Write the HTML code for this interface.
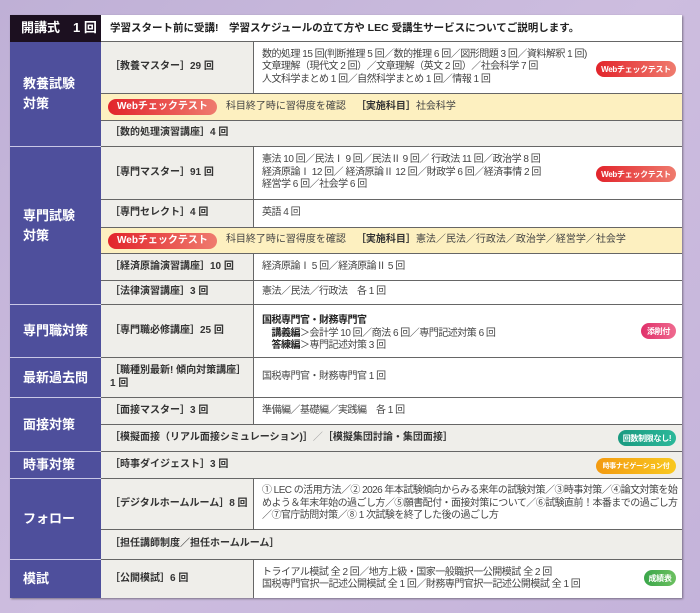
<!DOCTYPE html>
<html><head><meta charset="utf-8"><style>
*{margin:0;padding:0;box-sizing:border-box}
body{width:700px;height:613px;overflow:hidden;position:relative;background:linear-gradient(135deg,#bfb0d6 0%,#cdbddf 50%,#c4b3da 100%);font-family:"Liberation Sans","Noto Sans CJK JP",sans-serif;color:#333}
.t{position:absolute;left:10px;top:15px;width:672px;height:583px;background:#fff;box-shadow:1px 1px 2px rgba(0,0,0,.4)}
.b{position:absolute;display:flex;align-items:center;font-size:10px;line-height:12.5px}
.L{background:#4e4f9c;color:#fff;font-weight:bold;font-size:13px;line-height:20px;padding-left:13px;border-bottom:1px solid #c9c8e6}
.M{background:#efeeea;padding-left:9px;font-weight:bold;color:#333;border-bottom:1px solid #666;border-right:1px solid #666}
.R{background:#fff;padding-left:8px;border-bottom:1px solid #666;color:#444;letter-spacing:-0.5px}
.F{background:#efeeea;padding-left:9px;font-weight:bold;border-bottom:1px solid #666}
.Y{background:#fdf0c0;padding-left:7px;border-bottom:1px solid #666;color:#444}
.bd{position:absolute;height:16px;border-radius:8px;color:#fff;font-weight:bold;font-size:8px;display:flex;align-items:center;justify-content:center;white-space:nowrap;letter-spacing:-0.3px}
.web{background:linear-gradient(90deg,#e2242b,#ef7b6e);}
.wb{display:inline-block;height:16px;line-height:16px;padding:0 9px;border-radius:8px;color:#fff;font-weight:bold;font-size:10px;margin-right:9px;background:linear-gradient(90deg,#e2242b,#ef7b6e)}
</style></head><body>
<div class="t">
<div class="b" style="left:0;top:0;width:91px;height:27px;background:#1c1020;color:#fff;font-weight:bold;font-size:13px;padding-left:11px">開講式　1 回</div>
<div class="b" style="left:91px;top:0;width:581px;height:27px;padding-left:9px;font-weight:bold;border-bottom:1px solid #666;color:#222;font-size:10.5px">学習スタート前に受講!　学習スケジュールの立て方や LEC 受講生サービスについてご説明します。</div>

<div class="b L" style="left:0;top:27px;width:91px;height:105px">教養試験<br>対策</div>
<div class="b M" style="left:91px;top:27px;width:153px;height:52px">［教養マスター］29 回</div>
<div class="b R" style="left:244px;top:27px;width:428px;height:52px">数的処理 15 回(判断推理 5 回／数的推理 6 回／図形問題 3 回／資料解釈 1 回)<br>文章理解（現代文 2 回）／文章理解（英文 2 回）／社会科学 7 回<br>人文科学まとめ 1 回／自然科学まとめ 1 回／情報 1 回</div>
<div class="bd web" style="left:586px;top:46px;width:80px">Webチェックテスト</div>
<div class="b Y" style="left:91px;top:79px;width:581px;height:27px"><span class="wb">Webチェックテスト</span>科目終了時に習得度を確認　<b style="color:#333">［実施科目］</b>社会科学</div>
<div class="b F" style="left:91px;top:106px;width:581px;height:26px">［数的処理演習講座］4 回</div>

<div class="b L" style="left:0;top:132px;width:91px;height:158px">専門試験<br>対策</div>
<div class="b M" style="left:91px;top:132px;width:153px;height:53px">［専門マスター］91 回</div>
<div class="b R" style="left:244px;top:132px;width:428px;height:53px">憲法 10 回／民法Ⅰ 9 回／民法Ⅱ 9 回／ 行政法 11 回／政治学 8 回<br>経済原論Ⅰ 12 回／ 経済原論Ⅱ 12 回／財政学 6 回／経済事情 2 回<br>経営学 6 回／社会学 6 回</div>
<div class="bd web" style="left:586px;top:151px;width:80px">Webチェックテスト</div>
<div class="b M" style="left:91px;top:185px;width:153px;height:28px">［専門セレクト］4 回</div>
<div class="b R" style="left:244px;top:185px;width:428px;height:28px">英語 4 回</div>
<div class="b Y" style="left:91px;top:213px;width:581px;height:26px"><span class="wb">Webチェックテスト</span>科目終了時に習得度を確認　<b style="color:#333">［実施科目］</b>憲法／民法／行政法／政治学／経営学／社会学</div>
<div class="b M" style="left:91px;top:239px;width:153px;height:27px">［経済原論演習講座］10 回</div>
<div class="b R" style="left:244px;top:239px;width:428px;height:27px">経済原論Ⅰ 5 回／経済原論Ⅱ 5 回</div>
<div class="b M" style="left:91px;top:266px;width:153px;height:24px">［法律演習講座］3 回</div>
<div class="b R" style="left:244px;top:266px;width:428px;height:24px">憲法／民法／行政法　各 1 回</div>

<div class="b L" style="left:0;top:290px;width:91px;height:53px">専門職対策</div>
<div class="b M" style="left:91px;top:290px;width:153px;height:53px">［専門職必修講座］25 回</div>
<div class="b R" style="left:244px;top:290px;width:428px;height:53px;display:block;padding-top:10px"><b style="color:#222">国税専門官・財務専門官</b><br>　<b style="color:#222">講義編</b>＞会計学 10 回／商法 6 回／専門記述対策 6 回<br>　<b style="color:#222">答練編</b>＞専門記述対策 3 回</div>
<div class="bd" style="left:631px;top:308px;width:35px;background:linear-gradient(90deg,#e0306a,#ef6a8f)">添削付</div>

<div class="b L" style="left:0;top:343px;width:91px;height:40px">最新過去問</div>
<div class="b M" style="left:91px;top:343px;width:153px;height:40px">［職種別最新! 傾向対策講座］<br>1 回</div>
<div class="b R" style="left:244px;top:343px;width:428px;height:40px">国税専門官・財務専門官 1 回</div>

<div class="b L" style="left:0;top:383px;width:91px;height:54px">面接対策</div>
<div class="b M" style="left:91px;top:383px;width:153px;height:27px">［面接マスター］3 回</div>
<div class="b R" style="left:244px;top:383px;width:428px;height:27px">準備編／基礎編／実践編　各 1 回</div>
<div class="b F" style="left:91px;top:410px;width:581px;height:27px">［模擬面接（リアル面接シミュレーション)］<span style="color:#999;font-weight:normal">／</span>［模擬集団討論・集団面接］</div>
<div class="bd" style="left:608px;top:415px;width:58px;background:linear-gradient(90deg,#1a9a80,#2cb89a)">回数制限なし!</div>

<div class="b L" style="left:0;top:437px;width:91px;height:27px">時事対策</div>
<div class="b F" style="left:91px;top:437px;width:581px;height:27px">［時事ダイジェスト］3 回</div>
<div class="bd" style="left:586px;top:443px;width:80px;background:linear-gradient(90deg,#f39a10,#f8c820);font-size:7px">時事ナビゲーション付</div>

<div class="b L" style="left:0;top:464px;width:91px;height:81px">フォロー</div>
<div class="b M" style="left:91px;top:464px;width:153px;height:51px">［デジタルホームルーム］8 回</div>
<div class="b R" style="left:244px;top:464px;width:428px;height:51px;padding-right:4px;letter-spacing:-0.55px">① LEC の活用方法／② 2026 年本試験傾向からみる来年の試験対策／③時事対策／④論文対策を始めよう＆年末年始の過ごし方／⑤願書配付・面接対策について／⑥試験直前！本番までの過ごし方／⑦官庁訪問対策／⑧ 1 次試験を終了した後の過ごし方</div>
<div class="b F" style="left:91px;top:515px;width:581px;height:30px">［担任講師制度／担任ホームルーム］</div>

<div class="b L" style="left:0;top:545px;width:91px;height:38px;border-bottom:none">模試</div>
<div class="b M" style="left:91px;top:545px;width:153px;height:38px;border-bottom:none">［公開模試］6 回</div>
<div class="b R" style="left:244px;top:545px;width:428px;height:38px;border-bottom:none">トライアル模試 全 2 回／地方上級・国家一般職択一公開模試 全 2 回<br>国税専門官択一記述公開模試 全 1 回／財務専門官択一記述公開模試 全 1 回</div>
<div class="bd" style="left:634px;top:555px;width:32px;background:linear-gradient(90deg,#3aa64a,#6cc060)">成績表</div>
</div>
</body></html>
